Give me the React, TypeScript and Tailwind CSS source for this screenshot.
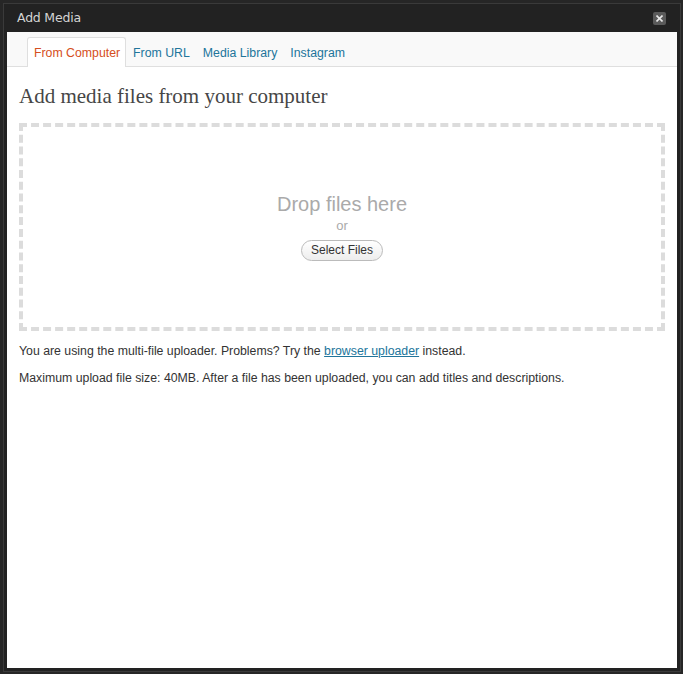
const tabs = ["From Computer", "From URL", "Media Library", "Instagram"];

export default function App() {
  return (
    <div className="h-[674px] w-[683px] bg-[#262626] pl-[4px] pt-[4px] font-['Liberation_Sans',Arial,sans-serif]">
      <div className="flex h-[667px] w-[676px] flex-col bg-[#222] px-[3px] pb-[3px] shadow-[0_0_0_1px_#3a3a3a]">
        <div className="flex h-[28px] items-center justify-between pl-[10px] pr-[11px]">
          <span className="font-['DejaVu_Sans',sans-serif] text-[12.5px] tracking-[-0.2px] text-[#d4d4d4]">
            Add Media
          </span>
          <button className="flex h-[13px] w-[13px] items-center justify-center rounded-[2px] bg-[#5a5a5a]">
            <svg width="7" height="7" viewBox="0 0 7 7">
              <path d="M0.5 0.5 L6.5 6.5 M6.5 0.5 L0.5 6.5" stroke="#e8e8e8" strokeWidth="1.6" />
            </svg>
          </button>
        </div>
        <div className="flex-1 bg-white">
          <div className="flex h-[35px] items-end border-b border-[#dfdfdf] bg-[#f9f9f9] pl-[20px]">
            {tabs.map((t, i) => (
              <div
                key={t}
                className={
                  i === 0
                    ? "-mb-px flex h-[30px] items-center rounded-t-[3px] border border-b-0 border-[#dfdfdf] bg-white pl-[6px] pr-[5px] pt-[2px] text-[12.3px] text-[#d54e21]"
                    : "-mb-px flex h-[30px] items-center border border-b-0 border-transparent pl-[6px] pr-[5px] pt-[2px] text-[12.3px] text-[#21759b]"
                }
              >
                {t}
              </div>
            ))}
          </div>
          <div className="px-[12px]">
            <h2 className="mt-[16px] font-['Liberation_Serif',Georgia,serif] text-[21px] leading-[26px] text-[#464646]">
              Add media files from your computer
            </h2>
            <div className="mt-[14px] flex h-[208px] w-[646px] flex-col items-center border-4 border-dashed border-[#dcdcdc] pt-[65px]">
              <div className="text-[20px] leading-[24px] text-[#aaa]">Drop files here</div>
              <div className="mt-[2px] text-[13px] leading-[16px] text-[#aaa]">or</div>
              <button className="mt-[6px] h-[21px] rounded-full border border-[#bbb] bg-gradient-to-b from-white to-[#ededed] px-[9px] text-[12px] leading-[19px] text-[#333]">
                Select Files
              </button>
            </div>
            <p className="mt-[12px] text-[12.3px] leading-[16px] text-[#333]">
              You are using the multi-file uploader. Problems? Try the{" "}
              <a href="#" className="text-[#21759b] underline">
                browser uploader
              </a>{" "}
              instead.
            </p>
            <p className="mt-[11px] text-[12.3px] leading-[16px] text-[#333]">
              Maximum upload file size: 40MB. After a file has been uploaded, you can add titles and descriptions.
            </p>
          </div>
        </div>
      </div>
    </div>
  );
}
